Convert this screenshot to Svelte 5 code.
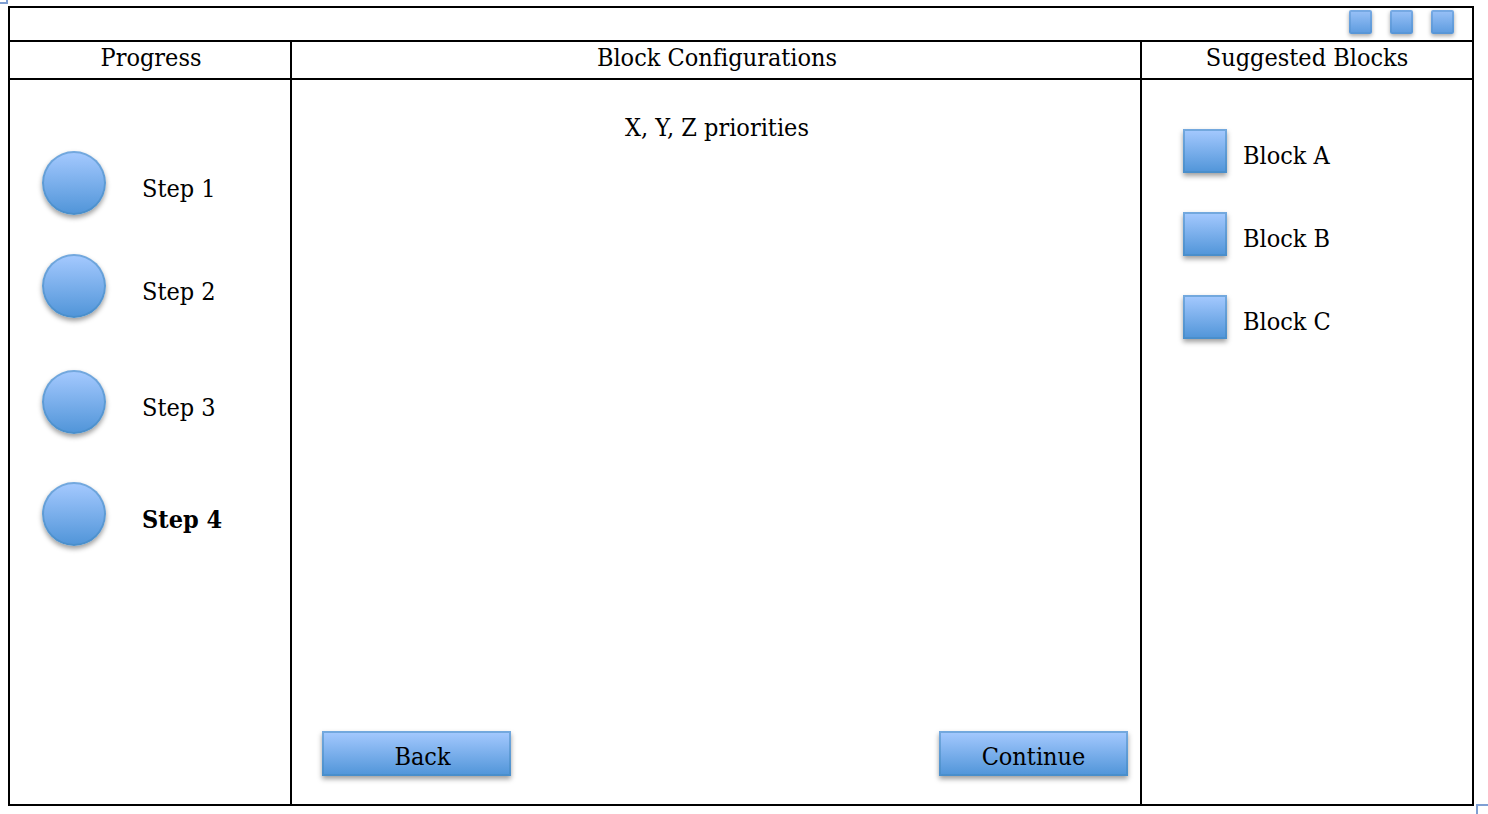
<script>
  const steps = ['Step 1', 'Step 2', 'Step 3', 'Step 4'];
  const current = 'Step 4';
  const blocks = ['Block A', 'Block B', 'Block C'];
  const tools = ['Minimize', 'Maximize', 'Close'];
</script>

<div class="page">
  <span class="handle start"></span>
  <div class="frame">
    <header class="toolbar">
      {#each tools as tool}
        <button class="shape tool" aria-label={tool}></button>
      {/each}
    </header>

    <div class="columns">
      <section class="column">
        <h2>Progress</h2>
        <ol class="steps">
          {#each steps as step}
            <li class:current={step === current}>
              <span class="shape circle"></span>
              <span class="label">{step}</span>
            </li>
          {/each}
        </ol>
      </section>

      <main class="column">
        <h2>Block Configurations</h2>
        <div class="content">
          <p>X, Y, Z priorities</p>
          <div class="actions">
            <button class="shape action back">Back</button>
            <button class="shape action">Continue</button>
          </div>
        </div>
      </main>

      <aside class="column">
        <h2>Suggested Blocks</h2>
        <ul class="blocks">
          {#each blocks as block}
            <li>
              <span class="shape square"></span>
              <span class="label">{block}</span>
            </li>
          {/each}
        </ul>
      </aside>
    </div>
  </div>
  <span class="handle end"></span>
</div>

<style>
  :global(body) {
    margin: 0;
    background: #fff;
  }

  .page {
    position: relative;
    box-sizing: border-box;
    display: flex;
    min-height: 100vh;
    padding: 6px 14px 8px 8px;
    overflow: hidden;
    color: #000;
    font-family: "DejaVu Serif Condensed", "DejaVu Serif", serif;
    font-size: 25px;
    font-variant-ligatures: none;
    line-height: 32px;
  }

  .frame {
    flex: 1;
    display: flex;
    flex-direction: column;
    border: 2px solid #000;
  }

  .toolbar {
    display: flex;
    justify-content: flex-end;
    gap: 18px;
    height: 30px;
    padding: 2px 18px 0 0;
    border-bottom: 2px solid #000;
  }

  .columns {
    flex: 1;
    display: grid;
    grid-template-columns: 282fr 850fr 330fr;
  }

  .column {
    display: flex;
    flex-direction: column;
    min-width: 0;
  }

  .column + .column {
    border-left: 2px solid #000;
    margin-left: -2px;
  }

  h2 {
    margin: 0;
    height: 36px;
    border-bottom: 2px solid #000;
    font-size: inherit;
    font-weight: 400;
    text-align: center;
  }

  ol,
  ul {
    margin: 0;
    padding: 0;
    list-style: none;
  }

  li {
    display: flex;
    align-items: flex-start;
  }

  .shape {
    box-sizing: border-box;
    flex: none;
    border: 2px solid rgba(66, 136, 190, 0.5);
    background: linear-gradient(#a6caff, #4f94d8) border-box;
    box-shadow: 0 3px 5px rgba(0, 0, 0, 0.38);
  }

  .steps {
    display: grid;
    grid-template-rows: 103px 116px 112px 64px;
    padding: 71px 0 0 32px;
  }

  .steps li {
    gap: 36px;
  }

  .steps .label {
    padding-top: 22px;
  }

  .current {
    font-weight: 700;
  }

  .circle {
    width: 64px;
    height: 64px;
    border-radius: 50%;
  }

  .content {
    flex: 1;
    display: flex;
    flex-direction: column;
    justify-content: space-between;
    padding: 32px 14px 28px 30px;
  }

  p {
    margin: 0;
    padding-right: 16px;
    text-align: center;
  }

  .actions {
    display: flex;
    justify-content: space-between;
  }

  .action {
    width: 189px;
    height: 45px;
    padding: 6px 0 0;
    color: inherit;
    font: inherit;
    font-variant-ligatures: none;
  }

  .back {
    padding-left: 12px;
  }

  .blocks {
    display: grid;
    gap: 39px;
    padding: 49px 0 0 41px;
  }

  .blocks li {
    gap: 16px;
  }

  .blocks .label {
    padding-top: 11px;
  }

  .square {
    width: 44px;
    height: 44px;
  }

  .tool {
    width: 23px;
    height: 24px;
    padding: 0;
    border-color: rgba(84, 146, 208, 0.5);
    border-radius: 2px;
    background-image: linear-gradient(#9ac2f8, #5b9ade);
    box-shadow: 0 2px 4px rgba(0, 0, 0, 0.35);
  }

  .handle {
    position: absolute;
    box-sizing: border-box;
    width: 14px;
    height: 14px;
    border: 2px solid #7f9fd3;
    background: #fff;
  }

  .start {
    top: -10px;
    left: -6px;
  }

  .end {
    right: -2px;
    bottom: -4px;
  }
</style>
